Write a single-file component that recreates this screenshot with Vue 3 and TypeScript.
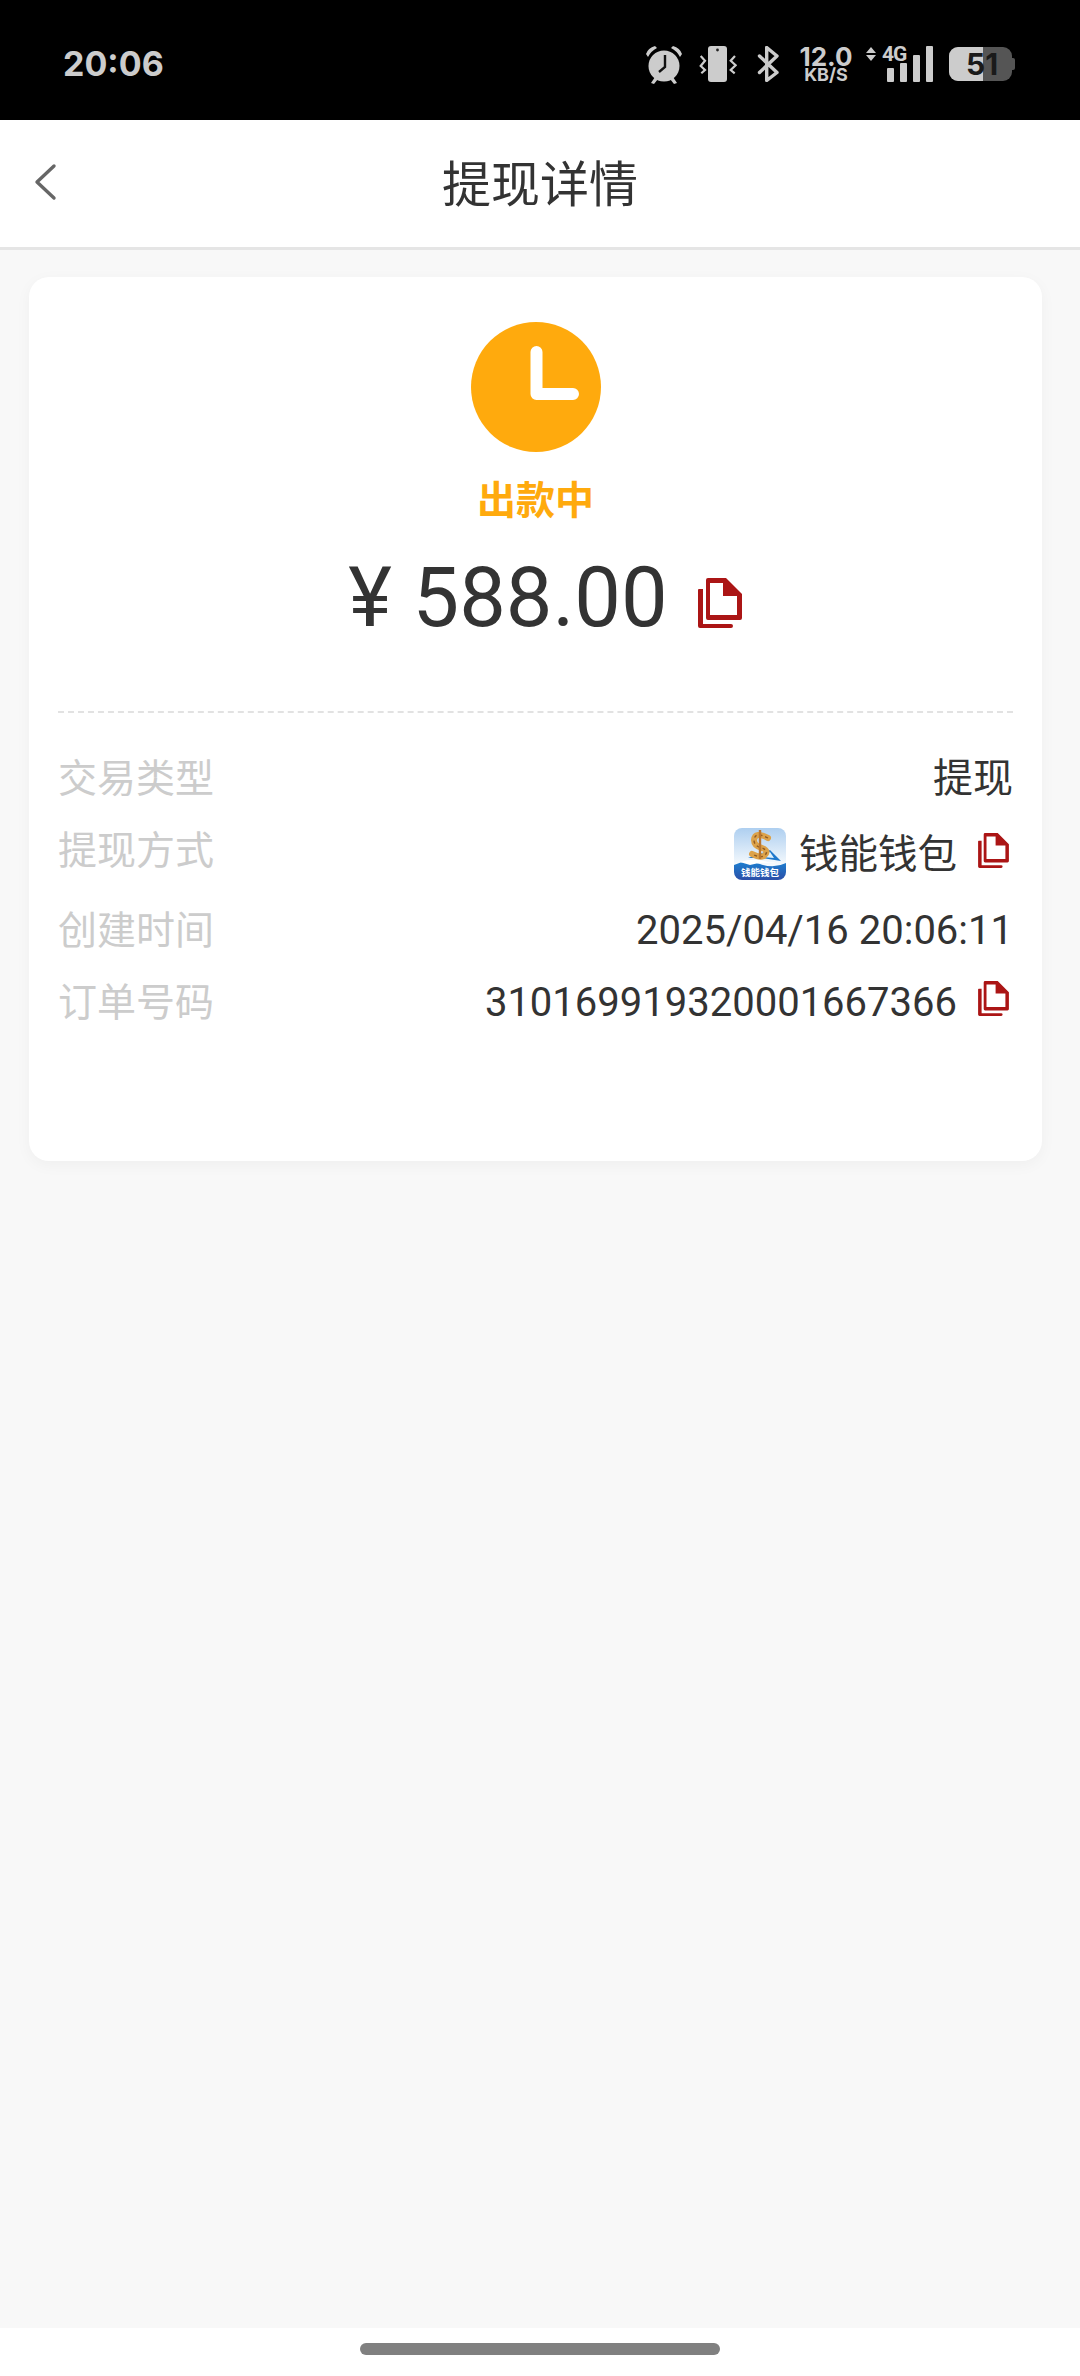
<script setup lang="ts">
interface Row {
  label: string
  value: string
  copy?: boolean
  logo?: boolean
}

const rows: Row[] = [
  { label: '交易类型', value: '提现' },
  { label: '提现方式', value: '钱能钱包', copy: true, logo: true },
  { label: '创建时间', value: '2025/04/16 20:06:11' },
  { label: '订单号码', value: '310169919320001667366', copy: true }
]
</script>

<template>
  <div class="page">
    <div class="status-bar">
      <span class="time">20:06</span>
      <div class="status-icons">
        <svg class="ic-alarm" width="38" height="39" viewBox="0 0 38 39">
          <path d="M1 9 Q3 3 10 1 L12 3 Q6 6 3 12Z M37 9 Q35 3 28 1 L26 3 Q32 6 35 12Z" fill="#ccc" />
          <path d="M6 38 L10 32 L13 34 L9 39Z M32 38 L28 32 L25 34 L29 39Z" fill="#ccc" />
          <circle cx="19" cy="21" r="15.5" fill="#ccc" />
          <path d="M20 10 V22 L14 27" fill="none" stroke="#111" stroke-width="2.4" />
        </svg>
        <svg class="ic-vibrate" width="38" height="36" viewBox="0 0 38 36">
          <rect x="9" y="0" width="19" height="36" rx="3" fill="#ccc" />
          <circle cx="18.5" cy="4" r="1.4" fill="#222" />
          <path d="M1.7 10 L6 14.7 L1.7 20 L6 24 L2.3 27.3 M36 10 L31.7 14.7 L36.6 19.3 L31.7 24 L35.7 27.3" fill="none" stroke="#ccc" stroke-width="2.2" />
        </svg>
        <svg class="ic-bt" width="22" height="36" viewBox="0 0 22 36">
          <path d="M2.5 10 L20 26.5 L9.7 34.5 V1.5 L20 10 L2.5 26.5" fill="none" stroke="#ccc" stroke-width="3.4" stroke-linejoin="round" stroke-linecap="round" />
        </svg>
        <div class="speed">
          <span class="speed-num">12.0</span>
          <span class="speed-unit">KB/S</span>
        </div>
        <div class="net">
          <svg class="net-arrows" width="10" height="14" viewBox="0 0 10 14">
            <path d="M5 0 L10 6 H0Z M5 14 L10 8 H0Z" fill="#ccc" />
          </svg>
          <span class="net-label">4G</span>
        </div>
        <div class="signal">
          <i style="height: 14px"></i>
          <i style="height: 19px"></i>
          <i style="height: 27px"></i>
          <i style="height: 36px"></i>
        </div>
        <div class="battery">
          <div class="battery-body">
            <div class="battery-fill" style="width: 54%"></div>
            <span class="battery-num">51</span>
          </div>
          <div class="battery-nub"></div>
        </div>
      </div>
    </div>

    <header class="nav">
      <svg class="back" width="24" height="38" viewBox="0 0 24 38">
        <path d="M21 3 L4 19 L21 35" fill="none" stroke="#666" stroke-width="3.4" stroke-linecap="round" stroke-linejoin="round" />
      </svg>
      <h1 class="title">提现详情</h1>
    </header>

    <main class="content">
      <section class="card">
        <div class="summary">
          <svg class="clock" width="130" height="130" viewBox="0 0 130 130">
            <circle cx="65" cy="65" r="65" fill="#ffaa0d" />
            <path d="M65.5 30 V72 H102" fill="none" stroke="#fff" stroke-width="12" stroke-linecap="round" stroke-linejoin="round" />
          </svg>
          <div class="state">出款中</div>
          <div class="amount">
            <span class="amount-text">¥ 588.00</span>
            <svg class="copy-big" width="44" height="50" viewBox="0 0 44 50">
              <path fill-rule="evenodd" d="M10 0 H28 L44 16 V40 a2 2 0 0 1 -2 2 H10 a2 2 0 0 1 -2 -2 V2 a2 2 0 0 1 2 -2Z M12 5 V37 H39 V18 H25 V5Z" fill="#ab1515" />
              <path d="M1 11 H5 V46 H33 a2 2 0 0 1 0 4 H2 a2 2 0 0 1 -2 -2 V12 a1 1 0 0 1 1 -1Z" fill="#ab1515" />
            </svg>
          </div>
        </div>

        <div class="divider"></div>

        <div class="rows">
          <div v-for="row in rows" :key="row.label" class="row" :class="{ 'row-logo': row.logo }">
            <span class="label">{{ row.label }}</span>
            <div class="value">
              <svg v-if="row.logo" class="logo" width="52" height="52" viewBox="0 0 52 52">
                <defs>
                  <linearGradient id="logoSky" x1="0" y1="0" x2="0" y2="1">
                    <stop offset="0" stop-color="#aecff0" />
                    <stop offset="0.7" stop-color="#f4f9fd" />
                  </linearGradient>
                  <linearGradient id="logoSea" x1="0" y1="0" x2="0" y2="1">
                    <stop offset="0" stop-color="#1d7fd0" />
                    <stop offset="1" stop-color="#2b4fa8" />
                  </linearGradient>
                  <clipPath id="logoClip">
                    <rect width="52" height="52" rx="8" />
                  </clipPath>
                </defs>
                <g clip-path="url(#logoClip)">
                  <rect width="52" height="52" fill="url(#logoSky)" />
                  <path d="M0 37 Q12 31 26 36 T52 35 V52 H0Z" fill="url(#logoSea)" />
                  <path d="M6 34 Q20 30 30 33 T48 33 L40 35 Q26 34 16 37Z" fill="#fff" />
                  <path d="M14 30 L36 22 L47 33 L28 30Z" fill="#1e78cc" />
                  <path d="M22 27 L36 24 L40 30 L28 29Z" fill="#dff0fb" />
                  <path d="M34 10 Q21 3 20 12 Q20 18 28 20 Q36 23 30 28 Q26 30 18 26" fill="none" stroke="#dca24a" stroke-width="6" stroke-linecap="round" />
                  <path d="M34 10 Q21 3 20 12 Q20 18 28 20 Q36 23 30 28 Q26 30 18 26" fill="none" stroke="#8f5a22" stroke-width="1.4" stroke-dasharray="3 3" />
                  <path d="M26 2 V31" stroke="#b9752f" stroke-width="2.4" />
                  <text x="26" y="47.5" class="logo-text">钱能钱包</text>
                </g>
              </svg>
              <span class="value-text">{{ row.value }}</span>
              <svg v-if="row.copy" class="copy" width="31" height="35" viewBox="0 0 44 50">
                <path fill-rule="evenodd" d="M10 0 H28 L44 16 V40 a2 2 0 0 1 -2 2 H10 a2 2 0 0 1 -2 -2 V2 a2 2 0 0 1 2 -2Z M12 5 V37 H39 V18 H25 V5Z" fill="#ab1515" />
                <path d="M1 11 H5 V46 H33 a2 2 0 0 1 0 4 H2 a2 2 0 0 1 -2 -2 V12 a1 1 0 0 1 1 -1Z" fill="#ab1515" />
              </svg>
            </div>
          </div>
        </div>
      </section>
    </main>

    <footer class="home-bar">
      <div class="home-pill"></div>
    </footer>
  </div>
</template>

<style scoped>
.page {
  width: 1080px;
  height: 2376px;
  display: flex;
  flex-direction: column;
  background: #f8f8f8;
  font-family: Roboto, 'Noto Sans CJK SC', sans-serif;
  color: #333;
  overflow: hidden;
}

.status-bar {
  height: 120px;
  flex: none;
  background: #000;
  color: #ccc;
  display: flex;
  align-items: center;
  justify-content: space-between;
  padding: 0 65px 0 63px;
  box-sizing: border-box;
}
.time {
  font-family: Inter, sans-serif;
  font-size: 34px;
  font-weight: 700;
  margin-top: 6px;
}
.status-icons {
  display: flex;
  align-items: center;
  margin-top: 8px;
  height: 40px;
}
.ic-vibrate {
  margin-left: 16px;
}
.ic-bt {
  margin-left: 20px;
}
.speed {
  margin-left: 21px;
  width: 52px;
  display: flex;
  flex-direction: column;
  align-items: center;
  font-family: Inter, sans-serif;
  font-weight: 700;
  line-height: 1;
}
.speed-num {
  font-size: 26px;
  height: 21px;
  line-height: 21px;
  white-space: nowrap;
}
.speed-unit {
  font-size: 18px;
  height: 15px;
  line-height: 15px;
  white-space: nowrap;
}
.net {
  margin-left: 14px;
  width: 37px;
  flex: none;
  display: flex;
  align-items: flex-start;
  gap: 6px;
  height: 36px;
}
.net-arrows {
  flex: none;
  margin-top: 1px;
}
.net-label {
  font-family: Roboto, sans-serif;
  font-size: 21px;
  font-weight: 700;
  letter-spacing: -1px;
  line-height: 16px;
}
.signal {
  margin-left: -16px;
  display: flex;
  align-items: flex-end;
  gap: 6px;
  height: 36px;
}
.signal i {
  display: block;
  width: 7px;
  background: #ccc;
  border-radius: 1px;
}
.battery {
  margin-left: 16px;
  display: flex;
  align-items: center;
}
.battery-body {
  position: relative;
  width: 63px;
  height: 34px;
  border-radius: 9px;
  background: #555;
  overflow: hidden;
}
.battery-fill {
  height: 100%;
  background: #ccc;
}
.battery-num {
  position: absolute;
  left: 17px;
  top: 0;
  font-family: Inter, sans-serif;
  font-size: 30px;
  font-weight: 700;
  line-height: 34px;
  color: #1a1a1a;
}
.battery-nub {
  width: 3px;
  height: 12px;
  background: #555;
  border-radius: 0 2px 2px 0;
}

.nav {
  position: relative;
  height: 130px;
  flex: none;
  box-sizing: border-box;
  padding-bottom: 6px;
  background: #fff;
  border-bottom: 3px solid #e5e5e5;
  display: flex;
  align-items: center;
  justify-content: center;
}
.back {
  position: absolute;
  left: 33px;
  top: 43px;
}
.title {
  margin: 0;
  font-size: 49px;
  font-weight: 400;
  color: #333;
  line-height: 1;
  font-family: 'Noto Sans CJK SC', sans-serif;
}

.content {
  flex: 1;
  padding: 27px 38px 0 29px;
}
.card {
  height: 884px;
  box-sizing: border-box;
  background: #fff;
  border-radius: 20px;
  box-shadow: 0 4px 16px rgba(0, 0, 0, 0.04);
  padding: 45px 29px 0;
}
.summary {
  display: flex;
  flex-direction: column;
  align-items: center;
}
.clock {
  display: block;
}
.state {
  margin-top: 22px;
  font-family: 'Noto Sans CJK SC', sans-serif;
  font-size: 39px;
  font-weight: 700;
  line-height: 46px;
  color: #ffaa0d;
}
.amount {
  margin-top: 30px;
  display: flex;
  align-items: center;
  margin-left: 19px;
  height: 96px;
}
.amount-text {
  font-size: 83px;
  line-height: 96px;
  white-space: pre;
}
.copy-big {
  margin-left: 30px;
  margin-top: 10px;
}

.divider {
  margin-top: 65px;
  border-top: 2px dashed #e2e2e2;
}

.rows {
  margin-top: 36px;
  display: flex;
  flex-direction: column;
  gap: 20px;
}
.row {
  display: flex;
  justify-content: space-between;
  align-items: flex-start;
  height: 52px;
}
.row-logo {
  height: 60px;
}
.label {
  font-family: 'Noto Sans CJK SC', sans-serif;
  font-size: 39px;
  line-height: 52px;
  color: #ccc;
}
.value {
  display: flex;
  align-items: flex-start;
  font-size: 40px;
  line-height: 52px;
  color: #333;
}
.value-text {
  margin-top: 4px;
}
.row-logo .value-text {
  margin-top: 8px;
  font-size: 39.5px;
}
.logo {
  margin-top: 7px;
  margin-right: 13px;
}
.logo-text {
  font-family: 'Noto Sans CJK SC', sans-serif;
  font-size: 9.5px;
  font-weight: 700;
  fill: #fff;
  text-anchor: middle;
}
.copy {
  margin-left: 21px;
  margin-right: 4px;
  margin-top: 8px;
}
.row-logo .copy {
  margin-top: 12px;
}
.home-bar {
  height: 48px;
  flex: none;
  background: #fff;
  display: flex;
  justify-content: center;
  align-items: flex-start;
}
.home-pill {
  margin-top: 15px;
  width: 360px;
  height: 12px;
  border-radius: 6px;
  background: #808080;
}
</style>

<style>
html,
body {
  margin: 0;
  padding: 0;
}
</style>
